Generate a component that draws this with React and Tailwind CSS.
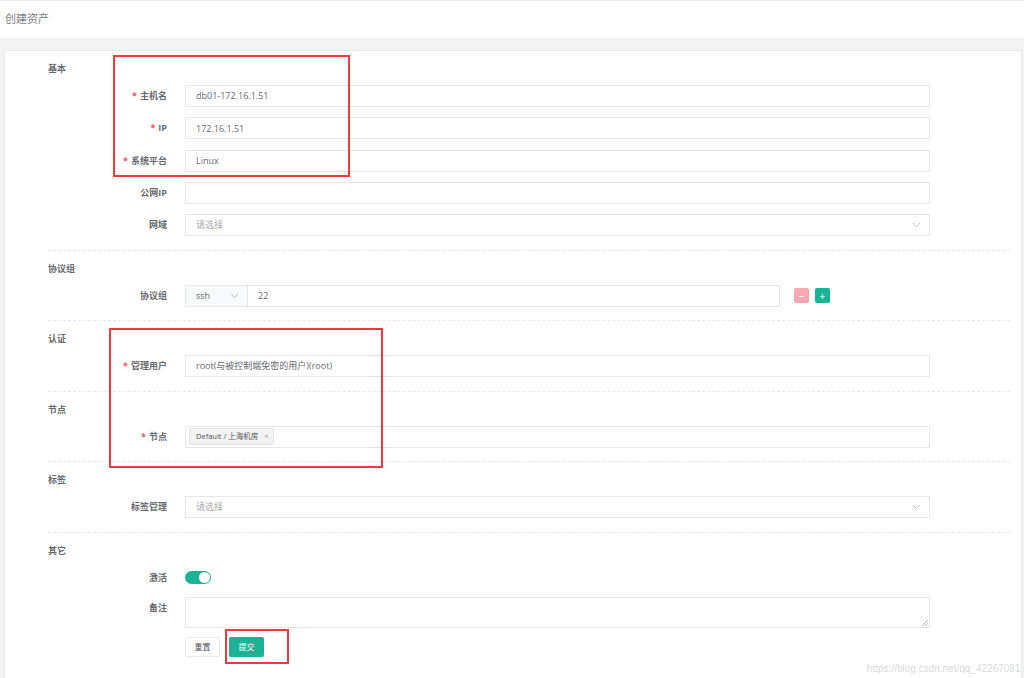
import React from "react";

const font = { fontFamily: '"Open Sans", "Noto Sans CJK SC", sans-serif' };

const Chevron = () => (
  <svg width="9" height="6" viewBox="0 0 9 6" className="shrink-0">
    <polyline points="1,1 4.5,4.5 8,1" fill="none" stroke="#b8bcc0" strokeWidth="0.9" />
  </svg>
);

const Row = ({ label, required, children, className = "items-center" }) => (
  <div className={`flex ${className}`}>
    <div className="w-[119px] shrink-0 text-right text-[9px] font-bold leading-[22px] text-[#676a6c]">
      {required && <span className="mr-[3px] text-[#ed5565]">*</span>}
      {label}
    </div>
    <div className="ml-[18px] flex items-center">{children}</div>
  </div>
);

const Input = ({ value, placeholder, select }) => (
  <div className="flex h-[22px] w-[745px] items-center justify-between border border-[#e5e6e7] bg-white pl-[10px] pr-[8px] text-[9px] text-[#676a6c]">
    {value ? <span>{value}</span> : <span className="text-[#aaaaaa]">{placeholder}</span>}
    {select && <Chevron />}
  </div>
);

const Section = ({ title, children, last }) => (
  <div
    className={`pt-[10px] pb-[13.5px] ${last ? "" : "border-b border-dashed border-[#e7eaec]"}`}
  >
    <div className="mb-[8px] h-[16px] text-[9px] font-bold leading-[16px] text-[#676a6c]">
      {title}
    </div>
    {children}
  </div>
);

export default function App() {
  return (
    <div className="relative h-[678px] w-[1024px] overflow-hidden bg-[#f3f3f4]" style={font}>
      {/* page heading */}
      <div className="flex h-[38px] items-center border-t border-[#e7eaec] bg-white px-[5px]">
        <span className="text-[11px] text-[#7d8083]">创建资产</span>
      </div>

      <div className="pl-[4px] pr-[2px] pt-[12px]">
        <div className="border border-[#e7eaec] bg-white pl-[43px] pr-[11px]">
          <Section title="基本">
            <div className="flex flex-col gap-[10.25px]">
              <Row label="主机名" required>
                <Input value="db01-172.16.1.51" />
              </Row>
              <Row label="IP" required>
                <Input value="172.16.1.51" />
              </Row>
              <Row label="系统平台" required>
                <Input value="Linux" />
              </Row>
              <Row label="公网IP">
                <Input />
              </Row>
              <Row label="网域">
                <Input placeholder="请选择" select />
              </Row>
            </div>
          </Section>

          <Section title="协议组">
            <Row label="协议组">
              <div className="flex h-[22px] w-[63px] items-center justify-between border border-[#e5e6e7] bg-[#f8f9fa] pl-[10px] pr-[8px] text-[9px] text-[#676a6c]">
                <span>ssh</span>
                <Chevron />
              </div>
              <div className="flex h-[22px] w-[532px] items-center border border-l-0 border-[#e5e6e7] pl-[10px] text-[9px] text-[#676a6c]">
                22
              </div>
              <div className="ml-[14px] flex h-[15px] w-[15px] items-center justify-center rounded-[2px] bg-[#f6a7b0] text-[11px] leading-none text-white">
                −
              </div>
              <div className="ml-[6px] flex h-[15px] w-[15px] items-center justify-center rounded-[2px] bg-[#1ab394] text-[11px] leading-none text-white">
                +
              </div>
            </Row>
          </Section>

          <Section title="认证">
            <Row label="管理用户" required>
              <Input value="root(与被控制端免密的用户)(root)" />
            </Row>
          </Section>

          <Section title="节点">
            <Row label="节点" required>
              <div className="flex h-[22px] w-[745px] items-center border border-[#e5e6e7] pl-[3px]">
                <div className="flex h-[17px] items-center gap-[6px] rounded-[2px] border border-[#e3e3e3] bg-[#f2f2f2] pl-[6px] pr-[5px] text-[7.5px] text-[#555]">
                  <span>Default / 上海机房</span>
                  <span className="text-[#999]">×</span>
                </div>
              </div>
            </Row>
          </Section>

          <Section title="标签">
            <Row label="标签管理">
              <Input placeholder="请选择" select />
            </Row>
          </Section>

          <Section title="其它" last>
            <Row label="激活">
              <div className="flex h-[13px] w-[26px] items-center justify-end rounded-full bg-[#1ab394] pr-[1px]">
                <div className="h-[11px] w-[11px] rounded-full bg-white" />
              </div>
            </Row>
            <div className="mt-[8px]">
              <Row label="备注" className="items-start">
                <div className="relative h-[31px] w-[745px] border border-[#e5e6e7]">
                  <svg width="6" height="6" viewBox="0 0 6 6" className="absolute bottom-[1px] right-[1px]">
                    <line x1="0" y1="6" x2="6" y2="0" stroke="#999" strokeWidth="0.7" />
                    <line x1="3" y1="6" x2="6" y2="3" stroke="#999" strokeWidth="0.7" />
                  </svg>
                </div>
              </Row>
            </div>
            <div className="mt-[9px] ml-[137px] flex gap-[9px] pb-[30px]">
              <div className="flex h-[20px] w-[35px] items-center justify-center rounded-[2px] border border-[#e7eaec] bg-white text-[8px] text-[#555]">
                重置
              </div>
              <div className="flex h-[20px] w-[35px] items-center justify-center rounded-[2px] bg-[#1ab394] text-[8px] text-white">
                提交
              </div>
            </div>
          </Section>
        </div>
      </div>

      {/* annotation boxes */}
      <div className="absolute left-[113px] top-[55px] h-[122px] w-[237px] border-2 border-[#f0393c]" />
      <div className="absolute left-[109px] top-[328px] h-[140px] w-[274px] border-2 border-[#f0393c]" />
      <div className="absolute left-[225px] top-[629px] h-[35px] w-[64px] border-2 border-[#f0393c]" />

      <div
        className="absolute left-[867px] top-[661px] text-[10px] text-[#d9d9d9]"
        style={{ fontFamily: '"Liberation Sans", sans-serif' }}
      >
        https://blog.csdn.net/qq_42267081
      </div>
    </div>
  );
}
